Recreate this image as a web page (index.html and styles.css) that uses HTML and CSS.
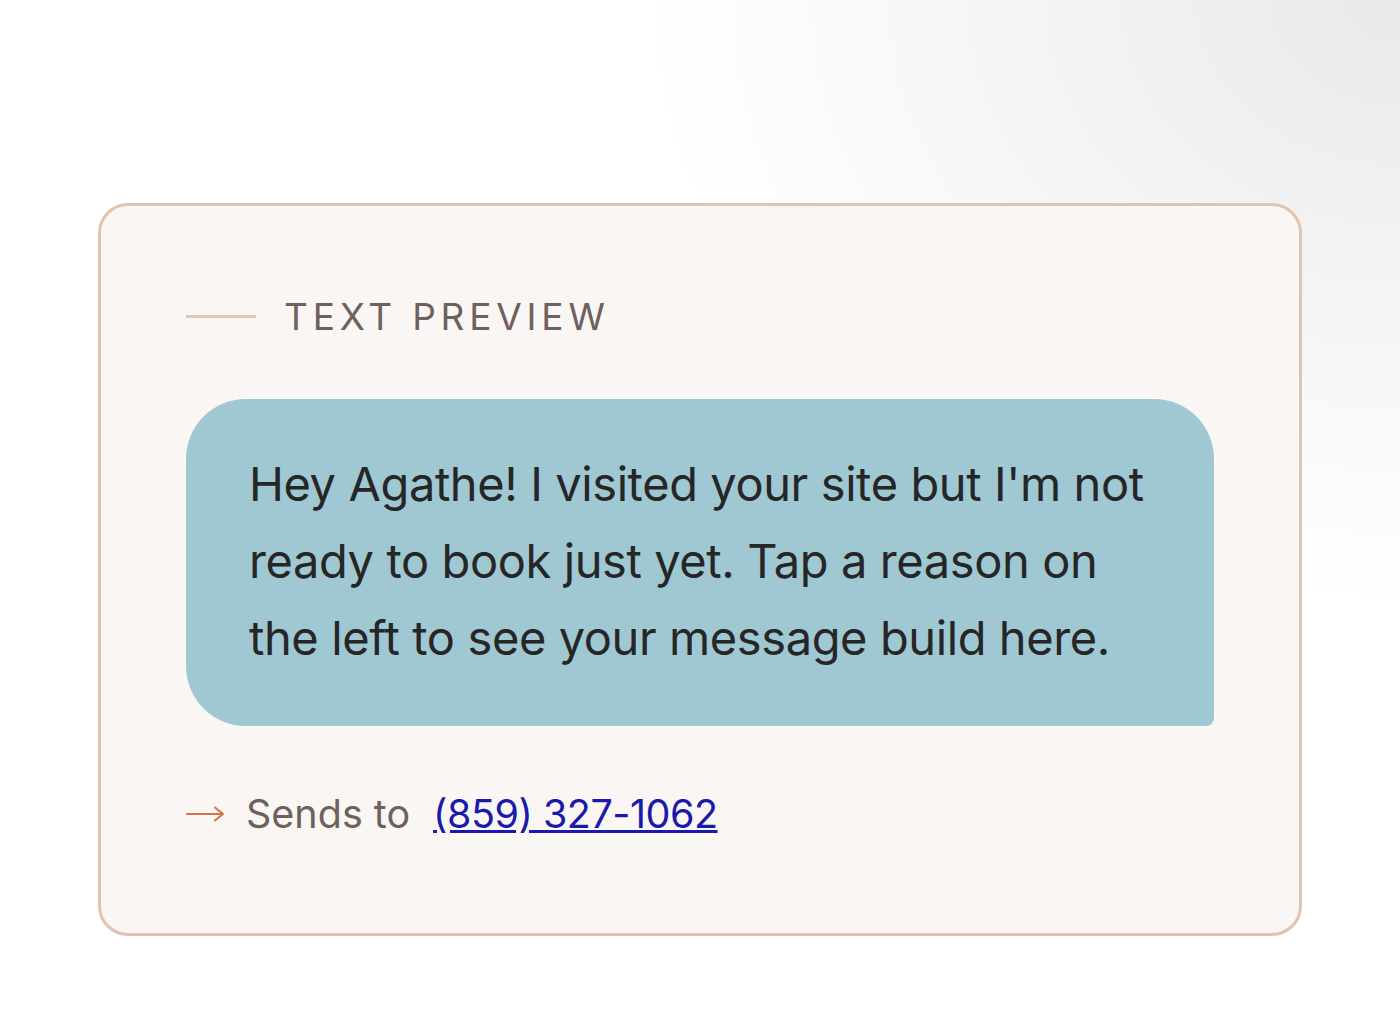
FILE: index.html
```html
<!DOCTYPE html>
<html lang="en">
<head>
<meta charset="utf-8">
<title>Text Preview</title>
<link rel="stylesheet" href="styles.css">
</head>
<body>
<main class="page">
  <section class="card">
    <div class="label">
      <span class="label-line"></span>
      <span class="label-text">TEXT PREVIEW</span>
    </div>
    <div class="bubble">
      <p class="bubble-text">Hey Agathe! I visited your site but I'm not ready to book just yet. Tap a reason on the left to see your message build here.</p>
    </div>
    <div class="sends">
      <svg class="sends-arrow" width="40" height="20" viewBox="0 0 40 20" aria-hidden="true">
        <path d="M1 10 H37 M29 3.5 L37 10 L29 16.5" fill="none" stroke="#d6704f" stroke-width="2" stroke-linecap="round" stroke-linejoin="round"/>
      </svg>
      <span class="sends-label">Sends to</span>
      <a class="sends-link" href="#">(859) 327-1062</a>
    </div>
  </section>
</main>
</body>
</html>
```

FILE: styles.css
```css
html, body {
  margin: 0;
  padding: 0;
}

body {
  width: 1400px;
  height: 1035px;
  overflow: hidden;
  font-family: "Inter", "Liberation Sans", sans-serif;
  background:
    radial-gradient(ellipse 1000px 800px at 100% 0%, #e9e9e9 0%, #f5f5f5 40%, #ffffff 75%);
}

.page {
  padding: 203px 98px 0 98px;
}

.card {
  box-sizing: border-box;
  height: 733px;
  border: 3px solid #e1c4af;
  border-radius: 30px;
  background: #faf6f4;
  padding: 92px 85px 0 85px;
  display: flex;
  flex-direction: column;
}

.label {
  display: flex;
  align-items: center;
  gap: 28px;
  height: 36px;
}

.label-line {
  width: 70px;
  height: 3px;
  background: #e2c6b3;
}

.label-text {
  font-size: 37px;
  letter-spacing: 4.8px;
  color: #6e605b;
  font-weight: 400;
}

.bubble {
  margin-top: 65px;
  width: 1028px;
  box-sizing: border-box;
  height: 327px;
  background: #9fc8d3;
  border-radius: 60px 60px 8px 60px;
  padding: 46px 60px 46px 63px;
}

.bubble-text {
  margin: 0;
  font-size: 47px;
  line-height: 77px;
  letter-spacing: -0.4px;
  color: #262626;
}

.sends {
  margin-top: 64px;
  display: flex;
  align-items: center;
  font-size: 39.5px;
  color: #6e605b;
}

.sends-arrow {
  display: block;
  margin-right: 20px;
}

.sends-label {
  margin-right: 23px;
}

.sends-link {
  color: #1a1aaa;
  letter-spacing: -0.5px;
  text-decoration: underline;
}
```
